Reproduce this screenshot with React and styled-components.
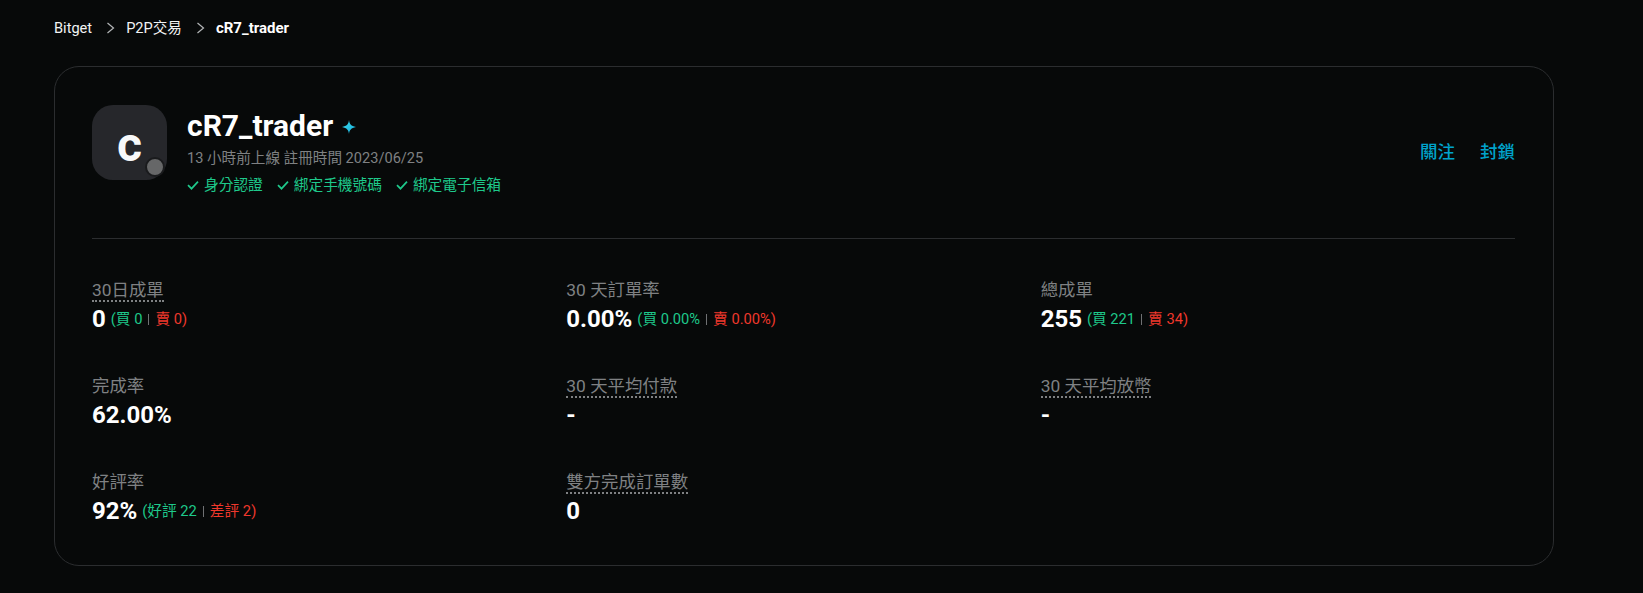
import styled, { createGlobalStyle } from "styled-components";

const LATIN = `Roboto, "Noto Sans CJK TC", sans-serif`;

const stats = [
  { label: "30日成單", dotted: true, value: "0", sub: ["買 0", "賣 0"] },
  { label: "30 天訂單率", value: "0.00%", sub: ["買 0.00%", "賣 0.00%"] },
  { label: "總成單", value: "255", sub: ["買 221", "賣 34"] },
  { label: "完成率", value: "62.00%" },
  { label: "30 天平均付款", dotted: true, value: "-" },
  { label: "30 天平均放幣", dotted: true, value: "-" },
  { label: "好評率", value: "92%", sub: ["好評 22", "差評 2"] },
  { label: "雙方完成訂單數", dotted: true, value: "0" },
];

const badges = ["身分認證", "綁定手機號碼", "綁定電子信箱"];

function App() {
  return (
    <>
      <GlobalStyle />
      <Page>
        <Crumbs>
          <span>Bitget</span>
          <Chevron />
          <span>P2P交易</span>
          <Chevron />
          <strong>cR7_trader</strong>
        </Crumbs>
        <Card>
          <Header>
            <Profile>
              <Avatar>
                c
                <StatusDot />
              </Avatar>
              <Info>
                <NameRow>
                  <Name>cR7_trader</Name>
                  <Sparkle />
                </NameRow>
                <Meta>13 小時前上線 註冊時間 2023/06/25</Meta>
                <Badges>
                  {badges.map((b) => (
                    <Badge key={b}>
                      <Check />
                      {b}
                    </Badge>
                  ))}
                </Badges>
              </Info>
            </Profile>
            <Actions>
              <span>關注</span>
              <span>封鎖</span>
            </Actions>
          </Header>
          <StatsGrid>
            {stats.map((s) => (
              <Stat key={s.label}>
                <StatLabel $dotted={s.dotted}>{s.label}</StatLabel>
                <ValueRow>
                  <Value>{s.value}</Value>
                  {s.sub && (
                    <Sub>
                      <Green>({s.sub[0]}</Green>
                      <Sep />
                      <Red>{s.sub[1]})</Red>
                    </Sub>
                  )}
                </ValueRow>
              </Stat>
            ))}
          </StatsGrid>
        </Card>
      </Page>
    </>
  );
}

function Chevron() {
  return (
    <CrumbIcon viewBox="0 0 12 12" fill="none">
      <path d="M2.500 1l6 5-6 5" stroke="#b4b6b8" strokeWidth="1.200" />
    </CrumbIcon>
  );
}

function Check() {
  return (
    <CheckIcon viewBox="0 0 12 12" fill="none">
      <path d="M1 6.200l3.500 3.500 6.500-7" stroke="#1ec98b" strokeWidth="1.700" />
    </CheckIcon>
  );
}

function Sparkle() {
  return (
    <SparkleIcon viewBox="0 0 14 14">
      <defs>
        <linearGradient id="spark" x1="0" y1="0" x2="1" y2="1">
          <stop offset="0" stopColor="#3fe0f0" />
          <stop offset="1" stopColor="#12a8d8" />
        </linearGradient>
      </defs>
      <path
        d="M7 0c.5 4 2 6 7 7-5 1-6.500 3-7 7-.5-4-2-6-7-7 5-1 6.500-3 7-7z"
        fill="url(#spark)"
      />
    </SparkleIcon>
  );
}

const GlobalStyle = createGlobalStyle`
  html, body {
    margin: 0;
    background: #070909;
  }
  body {
    font-family: ${LATIN};
    color: #fff;
  }
`;

const Page = styled.div`
  width: 1500px;
  height: 593px;
  padding-left: 54px;
  overflow: hidden;
`;

const Crumbs = styled.nav`
  display: flex;
  align-items: center;
  height: 56px;
  font-size: 14.6px;
  line-height: 20px;
  color: #f2f3f3;
  span,
  strong {
    height: 20px;
  }
  strong {
    font-weight: 700;
    font-size: 15px;
    color: #fff;
  }
`;

const CrumbIcon = styled.svg`
  width: 12px;
  height: 12px;
  margin: 0 9px 0 13px;
`;

const Card = styled.section`
  box-sizing: border-box;
  margin-top: 10px;
  height: 500px;
  padding: 38px 38px 0 37px;
  border: 1px solid #2b2d2f;
  border-radius: 25px;
`;

const Header = styled.header`
  display: flex;
  justify-content: space-between;
  align-items: flex-start;
  height: 133px;
  border-bottom: 1px solid #2b2d2f;
`;

const Profile = styled.div`
  display: flex;
  gap: 20px;
`;

const Avatar = styled.div`
  position: relative;
  width: 75px;
  height: 75px;
  padding-top: 3px;
  box-sizing: border-box;
  border-radius: 21px;
  background: #26272b;
  display: flex;
  align-items: center;
  justify-content: center;
  font-size: 48px;
  font-weight: 700;
  color: #f7f8f9;
`;

const StatusDot = styled.span`
  position: absolute;
  right: 2px;
  bottom: 3px;
  width: 16px;
  height: 16px;
  border-radius: 50%;
  background: #666768;
  border: 2px solid #1a1b1d;
`;

const Info = styled.div`
  display: flex;
  flex-direction: column;
`;

const NameRow = styled.div`
  display: flex;
  align-items: center;
  gap: 9px;
  height: 42px;
`;

const Name = styled.h1`
  margin: 0;
  font-size: 30px;
  font-weight: 700;
  line-height: 42px;
  color: #fff;
`;

const SparkleIcon = styled.svg`
  width: 14px;
  height: 14px;
  margin-top: 2px;
`;

const Meta = styled.div`
  font-size: 14.6px;
  line-height: 22px;
  color: #7f8183;
`;

const Badges = styled.div`
  display: flex;
  gap: 14px;
  margin-top: 5px;
`;

const Badge = styled.span`
  display: inline-flex;
  align-items: center;
  gap: 5px;
  font-size: 14.700px;
  line-height: 22px;
  color: #1ec98b;
`;

const CheckIcon = styled.svg`
  width: 12px;
  height: 12px;
`;

const Actions = styled.div`
  display: flex;
  gap: 25px;
  margin-top: 35px;
  font-size: 17.500px;
  font-weight: 500;
  line-height: 24px;
  color: #00a3cc;
`;

const StatsGrid = styled.div`
  display: grid;
  grid-template-columns: repeat(3, 1fr);
  grid-auto-rows: 96px;
  padding-top: 42px;
`;

const Stat = styled.div`
  display: flex;
  flex-direction: column;
  align-items: flex-start;
`;

const StatLabel = styled.span`
  font-size: 17.400px;
  line-height: 19px;
  color: #7f8183;
  border-bottom: ${(p) => (p.$dotted ? "2px dotted #7f8183" : "2px solid transparent")};
`;

const ValueRow = styled.div`
  display: flex;
  align-items: center;
  gap: 5px;
  margin-top: 2px;
`;

const Value = styled.span`
  font-size: 24px;
  font-weight: 700;
  line-height: 30px;
  color: #fff;
`;

const Sub = styled.span`
  display: inline-flex;
  align-items: center;
  font-size: 14.700px;
  line-height: 20px;
`;

const Green = styled.span`
  color: #1ec98b;
`;

const Red = styled.span`
  color: #f0382c;
`;

const Sep = styled.i`
  width: 1px;
  height: 11px;
  margin: 0 6px;
  background: #6f7173;
`;

export default App;
